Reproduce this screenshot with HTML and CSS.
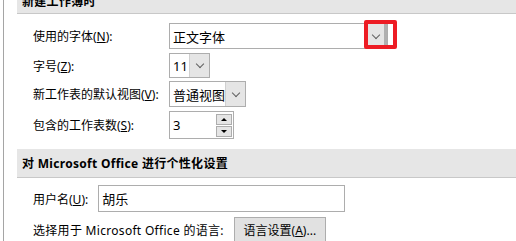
FILE: index.html
```html
<!DOCTYPE html>
<html lang="zh-CN">
    <head>
        <meta charset="UTF-8" />
        <title>常规选项</title>
        <link rel="stylesheet" href="styles.css">
    </head>

    <body>
        <div class="pane">
            <!-- 새 통합문서 -->
            <div class="sec-head first"><span>新建工作簿时</span></div>
            <div class="opts">
                <div class="row r1">
                    <span class="lbl">使用的字体(<u>N</u>):</span>
                    <div class="combo w-font">
                        <span class="val">正文字体</span>
                        <span class="drop hot"><i class="chev"></i></span>
                    </div>
                </div>
                <div class="row r2">
                    <span class="lbl">字号(<u>Z</u>):</span>
                    <div class="combo w-size">
                        <span class="val">11</span>
                        <span class="drop"><i class="chev"></i></span>
                    </div>
                </div>
                <div class="row r3">
                    <span class="lbl">新工作表的默认视图(<u>V</u>):</span>
                    <div class="combo w-view">
                        <span class="val">普通视图</span>
                        <span class="drop"><i class="chev"></i></span>
                    </div>
                </div>
                <div class="row r4">
                    <span class="lbl">包含的工作表数(<u>S</u>):</span>
                    <div class="spin">
                        <span class="val">3</span>
                        <span class="arrows">
                            <b class="up"></b>
                            <b class="dn"></b>
                        </span>
                    </div>
                </div>
            </div>

            <!-- 개인설정 -->
            <div class="sec-head">对 Microsoft Office 进行个性化设置</div>
            <div class="opts">
                <div class="row r5">
                    <span class="lbl2">用户名(<u>U</u>):</span>
                    <div class="textbox">胡乐</div>
                </div>
                <div class="row r6">
                    <span class="lbl2 wide">选择用于 Microsoft Office 的语言:</span>
                    <button class="btn">语言设置(<u>A</u>)...</button>
                </div>
            </div>
        </div>
    </body>
</html>
```

FILE: styles.css
```css
html {
    height: 241px;
}
body {
    margin: 0;
    height: 100%;
    background: #fff;
    font-family: "Noto Sans", "Noto Sans CJK SC", sans-serif;
    font-size: 12px;
    color: #000;
    overflow: hidden;
}

.pane {
    margin-left: 3px;
    padding-left: 13px;
    border-left: 1px solid #a5a5a5;
    height: 100%;
}

.sec-head {
    background: #e6e6e6;
    border-bottom: 1px solid #c8c8c8;
    font-weight: bold;
    letter-spacing: 0.3px;
    padding-left: 5px;
    height: 28px;
    display: flex;
    align-items: center;
    margin-top: 10px;
}
/* 위가 잘린 첫 헤더 */
.sec-head.first {
    display: block;
    margin-top: 0;
    height: 13px;
    overflow: hidden;
}
.sec-head.first span {
    display: block;
    line-height: 13px;
    margin-top: -5px;
}

.opts {
    padding-left: 16px;
}

.row {
    display: flex;
    align-items: center;
}

.lbl {
    width: 136px;
}
.lbl2 {
    margin-right: 10px;
}
.lbl2.wide {
    letter-spacing: 0.3px;
}

/* 행 위치 */
.r1 { margin-top: 9px; height: 26px; }
.r2 { margin-top: 4px; height: 25px; }
.r3 { margin-top: 3px; height: 26px; }
.r4 { margin-top: 4px; height: 28px; }
.r5 { margin-top: 7px; height: 27px; }
.r6 { margin-top: 5px; height: 26px; }

.combo {
    display: flex;
    align-items: stretch;
    height: 100%;
    box-sizing: border-box;
    border: 1px solid #adadad;
    background: #fff;
}
.combo .val {
    flex: 1;
    display: flex;
    align-items: center;
    padding-left: 3px;
    font-size: 13px;
}
.w-font { width: 219px; }
.w-size { width: 41px; }
.w-view { width: 77px; }

.drop {
    position: relative;
    width: 19px;
    background: #e5e5e5;
    border-left: 1px solid #d0d0d0;
    display: flex;
    align-items: center;
    justify-content: center;
}
.chev {
    width: 5px;
    height: 5px;
    border-right: 1px solid #606060;
    border-bottom: 1px solid #606060;
    transform: rotate(45deg);
    margin-top: -3px;
}

/* 빨간 강조 테두리 */
.drop.hot {
    width: 16px;
    border-right: 3px solid #b0b0b0;
}
.drop.hot::after {
    content: "";
    position: absolute;
    left: -4px;
    top: -4px;
    width: 25px;
    height: 21px;
    border: 4px solid #ed1c24;
    border-radius: 2px;
}

.spin {
    width: 65px;
    height: 100%;
    box-sizing: border-box;
    border: 1px solid #adadad;
    display: flex;
    align-items: center;
    justify-content: space-between;
    padding: 0 1px 0 3px;
}
.spin .val {
    font-size: 13px;
}
.arrows {
    display: flex;
    flex-direction: column;
    gap: 1px;
}
.arrows b {
    width: 16px;
    height: 11px;
    box-sizing: border-box;
    border: 1px solid #adadad;
    background: #e5e5e5;
    display: flex;
    align-items: center;
    justify-content: center;
}
.arrows b::before {
    content: "";
    border-left: 3px solid transparent;
    border-right: 3px solid transparent;
}
.arrows .up::before {
    border-bottom: 3px solid #000;
}
.arrows .dn::before {
    border-top: 3px solid #000;
}

.textbox {
    width: 247px;
    height: 100%;
    box-sizing: border-box;
    border: 1px solid #adadad;
    padding-left: 3px;
    display: flex;
    align-items: center;
    font-size: 13px;
}

.btn {
    height: 100%;
    width: 92px;
    padding: 0;
    font-family: inherit;
    font-size: 12px;
    background: #e1e1e1;
    border: 1px solid #adadad;
    color: #000;
}
```
